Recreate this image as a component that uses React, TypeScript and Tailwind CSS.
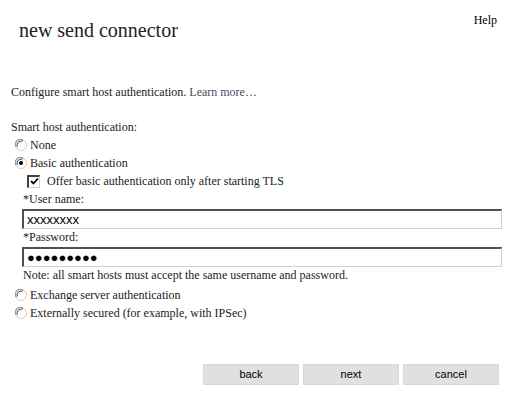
import React from "react";

const ELLIPSIS = "\u2026";
const DOTS = "\u25CF".repeat(9);

function Radio({ checked }: { checked?: boolean }) {
  return (
    <svg width="12" height="12" viewBox="0 0 12 12" className="shrink-0">
      <circle cx="6" cy="6" r="5.5" fill="#fff" stroke="#d4d0c8" />
      <path d="M1.2 8.2 A5 5 0 0 1 8.2 1.2" fill="none" stroke="#808080" strokeWidth="1" />
      <path d="M2.3 7.4 A4 4 0 0 1 7.4 2.3" fill="none" stroke="#404040" strokeWidth="1" />
      {checked && <circle cx="6" cy="6" r="2" fill="#000" />}
    </svg>
  );
}

function Checkbox() {
  return (
    <div className="w-[13px] h-[13px] shrink-0 bg-white border-t-2 border-l-2 border-t-[#404040] border-l-[#404040] border-r border-b border-r-[#d4d0c8] border-b-[#d4d0c8] flex items-center justify-center">
      <svg width="9" height="9" viewBox="0 0 9 9">
        <path d="M1 4 L3.5 6.5 L8 1.5" fill="none" stroke="#000" strokeWidth="1.8" />
      </svg>
    </div>
  );
}

function TextBox({ value }: { value: string }) {
  return (
    <div className="h-[20px] ml-[22px] mr-[18px] bg-white border-t-2 border-l-2 border-t-[#505050] border-l-[#505050] border-r border-b border-r-[#d4d0c8] border-b-[#d4d0c8] flex items-center px-[3px] font-['Liberation_Sans',sans-serif] text-[13px] text-black">
      {value}
    </div>
  );
}

export default function App() {
  return (
    <div className="w-[520px] h-[406px] bg-white relative font-['Liberation_Serif',serif] text-[12px] text-[#222] overflow-hidden">
      <div className="absolute right-[23px] top-[11px] text-black">Help</div>

      <div className="pt-[16px] pl-[19px] text-[20px] leading-[28px]">new send connector</div>

      <div className="mt-[40px] pl-[11px] leading-[16px]">
        Configure smart host authentication. <span className="text-[#4a4a60]">Learn more{ELLIPSIS}</span>
      </div>

      <div className="mt-[19px] pl-[11px] leading-[16px]">Smart host authentication:</div>

      <div className="mt-[1px] flex flex-col">
        <div className="h-[18px] flex items-center gap-[3px] pl-[15px]">
          <Radio />
          <span>None</span>
        </div>
        <div className="h-[18px] flex items-center gap-[3px] pl-[15px]">
          <Radio checked />
          <span>Basic authentication</span>
        </div>
        <div className="h-[18px] flex items-center gap-[7px] pl-[27px]">
          <Checkbox />
          <span>Offer basic authentication only after starting TLS</span>
        </div>
        <div className="h-[17px] flex items-end pl-[23px] leading-[16px]">*User name:</div>
        <div className="mt-[2px]">
          <TextBox value="xxxxxxxx" />
        </div>
        <div className="h-[16px] flex items-end pl-[23px] leading-[16px]">*Password:</div>
        <div className="mt-[2px]">
          <TextBox value={DOTS} />
        </div>
        <div className="h-[18px] flex items-start pl-[23px] leading-[16px]">
          Note: all smart hosts must accept the same username and password.
        </div>
        <div className="h-[19px] flex items-center gap-[3px] pl-[15px]">
          <Radio />
          <span>Exchange server authentication</span>
        </div>
        <div className="h-[18px] flex items-center gap-[3px] pl-[15px]">
          <Radio />
          <span>Externally secured (for example, with IPSec)</span>
        </div>
      </div>

      <div className="absolute left-[203px] top-[364px] flex gap-[4px] font-['Liberation_Sans',sans-serif] text-[11px] text-black">
        <button className="w-[96px] h-[21px] bg-[#e0e0e0] border border-[#d8d8d8]">back</button>
        <button className="w-[96px] h-[21px] bg-[#e0e0e0] border border-[#d8d8d8]">next</button>
        <button className="w-[96px] h-[21px] bg-[#e0e0e0] border border-[#d8d8d8]">cancel</button>
      </div>
    </div>
  );
}
